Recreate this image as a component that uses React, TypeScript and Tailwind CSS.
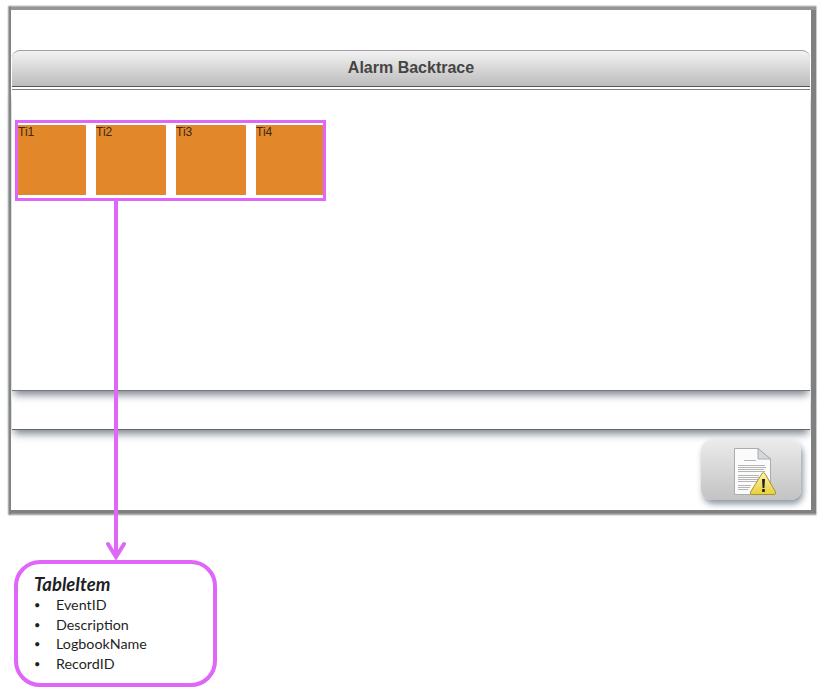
const items = ['Ti1', 'Ti2', 'Ti3', 'Ti4'];
const fields = ['EventID', 'Description', 'LogbookName', 'RecordID'];

function LogWarningIcon() {
  return (
    <svg width="44" height="48" viewBox="0 0 44 48" className="block">
      <defs>
        <linearGradient id="warn" x1="0" y1="0" x2="0" y2="1">
          <stop offset="0" stopColor="#fdf6a8" />
          <stop offset="1" stopColor="#e8cf3c" />
        </linearGradient>
      </defs>
      {/* page */}
      <path d="M0.5 0.5H24L36.5 11V46.5H0.5Z" fill="#fbfbfb" stroke="#a9acb2" />
      <path d="M24 0.5V11H36.5Z" fill="#d5d7dc" stroke="#a9acb2" />
      <g stroke="#b4b4b4" strokeWidth="1">
        <path d="M10 12.5H22" />
        <path d="M4 17.5H31M4 19.5H32M4 21.5H30M4 23.5H31" />
        <path d="M4 27.5H25M4 29.5H30M4 31.5H30M4 33.5H28" />
        <path d="M4 37.5H17M4 39.5H16M4 41.5H14" />
      </g>
      {/* warning triangle */}
      <path d="M28 25.5Q29.5 24 31 25.5L41.5 44Q42.5 46.5 40 46.5H18Q15.5 46.5 16.5 44Z" fill="url(#warn)" stroke="#a8952f" />
      <path d="M28 31H31L30.4 40H28.6Z" fill="#222" />
      <rect x="28.2" y="41" width="2.6" height="3" fill="#222" />
    </svg>
  );
}

export default function App() {
  return (
    <div className="relative w-[821px] h-[694px] overflow-hidden bg-white pl-[11px] pt-[10px] font-['Liberation_Sans',sans-serif]">
      {/* Window */}
      <div className="w-[800px] h-[500px] bg-white flex flex-col px-px shadow-[1px_0.5px_1.5px_4.5px_#808080]">
        <div className="h-[40px]" />
        <div className="h-[36px] rounded-t-[8px] border-t border-[#a39ea3] bg-gradient-to-b from-[#f3f3f3] to-[#bcbcbc] flex items-center justify-center pb-[2px] text-[16px] font-bold text-[#454545]">
          Alarm Backtrace
        </div>
        <div className="h-[4px] border-y border-t-[#555555] border-b-[#808080] bg-white" />

        {/* Table area */}
        <div className="h-[301px] pt-[30px] pl-[3px] border-b border-[#777777] shadow-[0_6px_8px_-2px_#7f8790]">
          <div className="w-[311px] h-[81px] border-[3px] border-[#e066fa] flex gap-[10px] pt-[2px]">
            {items.map((name, i) => (
              <div key={name} className={i === 0 ? 'w-[68px] h-[70px] shrink-0 bg-[#e3872b] text-[12px] leading-[14px] text-[#3a2a14]' : i === 3 ? 'w-[67px] h-[70px] shrink-0 bg-[#e3872b] text-[12px] leading-[14px] text-[#3a2a14]' : 'w-[70px] h-[70px] shrink-0 bg-[#e3872b] text-[12px] leading-[14px] text-[#3a2a14]'}>
                {name}
              </div>
            ))}
          </div>
        </div>

        <div className="h-[39px] border-b border-[#666666] shadow-[0_6px_8px_-2px_#7f8790]" />

        {/* Footer */}
        <div className="flex-1 flex justify-end items-start pt-[10px] pr-[9px]">
          <div className="w-[100px] h-[60px] rounded-[10px] bg-gradient-to-b from-[#ebebeb] to-[#c3c3c3] flex items-center justify-center shadow-[2px_4px_6px_#8d97a3] pl-[9px] pt-[3px]">
            <LogWarningIcon />
          </div>
        </div>
      </div>

      {/* Connector */}
      <svg width="40" height="362" viewBox="0 0 40 362" className="absolute left-[96px] top-[200px]">
        <path d="M20 0V357" stroke="#e066fa" strokeWidth="4" fill="none" />
        <path d="M12 344L20 357L28 344" stroke="#e066fa" strokeWidth="4" fill="none" strokeLinecap="round" strokeLinejoin="miter" />
      </svg>

      {/* Callout */}
      <div className="mt-[50px] ml-[3px] w-[203px] h-[127px] rounded-[26px] border-4 border-[#e066fa] bg-white pl-[16px] pt-[10px] font-['Lato',sans-serif] text-[#1f1f26]">
        <div className="text-[18.5px] leading-[21px] font-bold italic">TableItem</div>
        <ul className="text-[14.3px] leading-[19.6px]">
          {fields.map((f) => (
            <li key={f} className="flex">
              <span className="w-[22px] text-[11px]">•</span>
              {f}
            </li>
          ))}
        </ul>
      </div>
    </div>
  );
}
